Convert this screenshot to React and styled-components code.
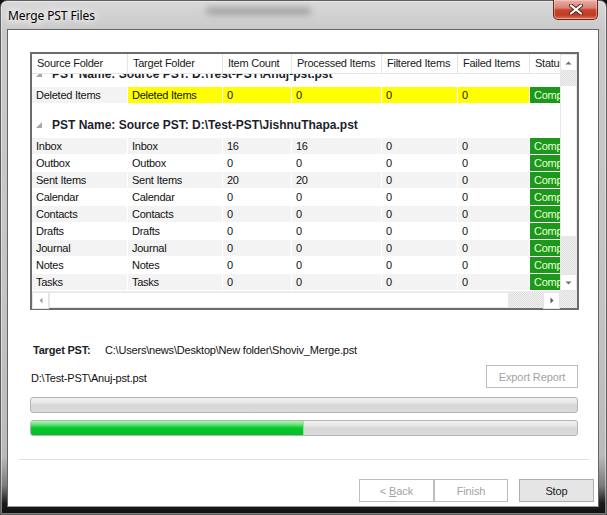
import React from "react";
import styled, { createGlobalStyle } from "styled-components";

const COLS = "96px 95px 69px 90px 76px 72px 80px";
const FONT = `"Liberation Sans", Arial, sans-serif`;

const GlobalStyle = createGlobalStyle`
  *, *::before, *::after { box-sizing: border-box; }
  html, body { margin: 0; padding: 0; width: 607px; height: 515px; overflow: hidden; background: #111; }
  #root { width: 607px; height: 515px; }
`;

const Window = styled.div`
  position: relative;
  width: 607px;
  height: 515px;
  display: flex;
  flex-direction: column;
  padding: 0 7px 7px 6px;
  border: 1px solid #5e5e5e;
  border-radius: 7px 7px 0 0;
  background: linear-gradient(
    to bottom,
    #d8d8d8 0px,
    #cacaca 28px,
    #c4c4c4 300px,
    #bababa 455px,
    #7a7a7a 485px,
    #1c1c1c 502px,
    #0e0e0e 515px
  );
  box-shadow: inset 0 0 0 1px rgba(255, 255, 255, 0.45);
  font-family: ${FONT};
`;

const TitleBar = styled.div`
  height: 28px;
  display: flex;
  align-items: center;
  padding-left: 1px;
  padding-top: 1px;
`;

const Title = styled.span`
  font-family: "Noto Sans", "Open Sans", sans-serif;
  font-size: 12px;
  letter-spacing: -0.1px;
  color: #000;
  text-shadow: 0 0 6px #fff, 0 0 10px #fff, 0 0 14px rgba(255, 255, 255, 0.9);
`;

const Smudge = styled.div`
  position: absolute;
  left: 205px;
  top: 6px;
  width: 105px;
  height: 8px;
  border-radius: 4px;
  background: rgba(110, 110, 110, 0.45);
  filter: blur(3px);
`;

const CloseButton = styled.div`
  position: absolute;
  top: -1px;
  right: 8px;
  width: 45px;
  height: 20px;
  border: 1px solid #6d2419;
  border-top: none;
  border-radius: 0 0 5px 5px;
  background: linear-gradient(
    to bottom,
    #e9b0a6 0%,
    #dc8272 42%,
    #c6442e 52%,
    #c23b25 80%,
    #d9775f 100%
  );
  box-shadow: inset 0 0 0 1px rgba(255, 220, 210, 0.45);
  display: flex;
  align-items: center;
  justify-content: center;
`;

const Client = styled.div`
  flex: 1;
  min-height: 0;
  display: flex;
  flex-direction: column;
  background: #fff;
  border: 1px solid #656565;
  border-bottom-color: #9a9a9a;
  padding: 22px 19px 0 22px;
`;

const GridFrame = styled.div`
  display: grid;
  grid-template-columns: 528px 17px;
  grid-template-rows: 237px 17px;
  width: 549px;
  border: 2px solid #6c6c6c;
  background: #fff;
`;

const Viewport = styled.div`
  grid-row: 1;
  grid-column: 1;
  display: flex;
  flex-direction: column;
  overflow: hidden;
`;

const HeaderRow = styled.div`
  display: grid;
  grid-template-columns: ${COLS};
  height: 20px;
  flex-shrink: 0;
  border-bottom: 1px solid #e5e5e5;
`;

const HeaderCell = styled.div`
  padding-left: 5px;
  line-height: 19px;
  font-size: 11px;
  letter-spacing: -0.25px;
  color: #1a1a1a;
  border-right: 1px solid #e5e5e5;
  white-space: nowrap;
  overflow: hidden;
`;

const Body = styled.div`
  flex: 1;
  overflow: hidden;
`;

const ScrollContent = styled.div`
  margin-top: ${(p) => -p.$offset}px;
`;

const GroupHeader = styled.div`
  height: 34px;
  padding: 14px 0 0 4px;
  display: flex;
  align-items: flex-start;
  gap: 10px;
  font-size: 12px;
  font-weight: bold;
  line-height: 14px;
  color: #1e1e2c;
  white-space: nowrap;
`;

const GroupIcon = styled.svg`
  margin-top: 4px;
  flex-shrink: 0;
`;

const Row = styled.div`
  display: grid;
  grid-template-columns: ${COLS};
  height: 17px;
`;

const Cell = styled.div`
  background: ${(p) => p.$bg};
  color: ${(p) => p.$color || "#111"};
  border-right: 1px solid #fff;
  border-bottom: 1px solid #fff;
  padding-left: 4px;
  font-size: 11px;
  letter-spacing: -0.25px;
  line-height: 16px;
  white-space: nowrap;
  overflow: hidden;
`;

const VScroll = styled.div`
  grid-row: 1;
  grid-column: 2;
  display: flex;
  flex-direction: column;
`;

const HScroll = styled.div`
  grid-row: 2;
  grid-column: 1;
  display: flex;
  border-top: 1px solid #ececec;
`;

const Corner = styled.div`
  grid-row: 2;
  grid-column: 2;
  background: repeating-conic-gradient(#dedede 0 25%, #f0f0f0 0 50%) 0 0 / 2px 2px;
`;

const ScrollButton = styled.div`
  flex: 0 0 17px;
  width: 17px;
  height: 17px;
  background: #fff;
  border: 1px solid #e4e4e4;
  display: flex;
  align-items: center;
  justify-content: center;
`;

const Track = styled.div`
  flex: 0 0 ${(p) => p.$size}px;
  background: repeating-conic-gradient(#dedede 0 25%, #f0f0f0 0 50%) 0 0 / 2px 2px;
`;

const Thumb = styled.div`
  flex: 0 0 ${(p) => p.$size}px;
  background: #fff;
  border: 1px solid #e8e8e8;
`;

const TargetRow = styled.div`
  margin-top: 33px;
  height: 14px;
  display: flex;
  padding-left: 3px;
  font-size: 11px;
  line-height: 14px;
  letter-spacing: -0.2px;
  color: #111;
`;

const Label = styled.span`
  width: 72px;
  font-weight: bold;
  color: #222;
`;

const SourceRow = styled.div`
  margin-top: 8px;
  height: 23px;
  display: flex;
  align-items: center;
  justify-content: space-between;
`;

const SourcePath = styled.span`
  padding: 2px 0 0 1px;
  font-size: 11px;
  letter-spacing: -0.2px;
  color: #111;
`;

const Button = styled.button`
  width: ${(p) => p.$width}px;
  height: 23px;
  margin: 0 ${(p) => p.$mr || 0}px 0 ${(p) => p.$ml || 0}px;
  padding: 0;
  font-family: ${FONT};
  font-size: 11px;
  letter-spacing: -0.1px;
  color: ${(p) => (p.disabled ? "#a3a3a3" : "#1a1a1a")};
  border: 1px solid ${(p) => (p.disabled ? "#bdbdbd" : "#adadad")};
  background: ${(p) =>
    p.disabled
      ? "#fff"
      : "repeating-conic-gradient(#e1e1e1 0 25%, #e9e9e9 0 50%) 0 0 / 2px 2px"};
  u {
    text-decoration: underline;
  }
`;

const Progress = styled.div`
  margin-top: ${(p) => p.$mt}px;
  width: 548px;
  height: 16px;
  border: 1px solid #b4b4b4;
  border-radius: 3px;
  overflow: hidden;
  background: linear-gradient(
    to bottom,
    #f4f4f4 0%,
    #e6e6e6 35%,
    #d7d7d7 50%,
    #dbdbdb 100%
  );
`;

const ProgressFill = styled.div`
  height: 100%;
  width: ${(p) => p.$value}%;
  background: linear-gradient(
    to bottom,
    #b2f2bb 0%,
    #5fe070 28%,
    #07c82b 50%,
    #02bf26 100%
  );
  border-right: 1px solid #9bdca6;
`;

const Separator = styled.div`
  margin: 23px -11px 0 -11px;
  height: 1px;
  background: #e3e3e3;
`;

const ButtonRow = styled.div`
  margin: 19px -15px 0 0;
  display: flex;
  justify-content: flex-end;
`;

const Arrow = ({ dir, color }) => {
  const pts = {
    up: "0.5,4.5 3.5,1.5 6.5,4.5",
    down: "0.5,1.5 3.5,4.5 6.5,1.5",
    left: "4.5,0.5 1.5,3.5 4.5,6.5",
    right: "1.5,0.5 4.5,3.5 1.5,6.5",
  }[dir];
  const vertical = dir === "up" || dir === "down";
  return (
    <svg width={vertical ? 7 : 6} height={vertical ? 6 : 7} viewBox={vertical ? "0 0 7 6" : "0 0 6 7"}>
      <polygon points={pts} fill={color} />
    </svg>
  );
};

const columns = [
  "Source Folder",
  "Target Folder",
  "Item Count",
  "Processed Items",
  "Filtered Items",
  "Failed Items",
  "Status",
];

const groups = [
  {
    name: "PST Name: Source PST: D:\\Test-PST\\Anuj-pst.pst",
    rows: [{ src: "Deleted Items", tgt: "Deleted Items", c: "0", p: "0", f: "0", x: "0", hl: true }],
  },
  {
    name: "PST Name: Source PST: D:\\Test-PST\\JishnuThapa.pst",
    rows: [
      { src: "Inbox", tgt: "Inbox", c: "16", p: "16", f: "0", x: "0" },
      { src: "Outbox", tgt: "Outbox", c: "0", p: "0", f: "0", x: "0" },
      { src: "Sent Items", tgt: "Sent Items", c: "20", p: "20", f: "0", x: "0" },
      { src: "Calendar", tgt: "Calendar", c: "0", p: "0", f: "0", x: "0" },
      { src: "Contacts", tgt: "Contacts", c: "0", p: "0", f: "0", x: "0" },
      { src: "Drafts", tgt: "Drafts", c: "0", p: "0", f: "0", x: "0" },
      { src: "Journal", tgt: "Journal", c: "0", p: "0", f: "0", x: "0" },
      { src: "Notes", tgt: "Notes", c: "0", p: "0", f: "0", x: "0" },
      { src: "Tasks", tgt: "Tasks", c: "0", p: "0", f: "0", x: "0" },
    ],
  },
];

const GREEN = "#1d981d";
const YELLOW = "#ffff00";

function DataRow({ row, index }) {
  const base = index % 2 === 0 ? "#f3f3f3" : "#ffffff";
  const fill = row.hl ? YELLOW : base;
  return (
    <Row>
      <Cell $bg={base}>{row.src}</Cell>
      <Cell $bg={fill}>{row.tgt}</Cell>
      <Cell $bg={fill}>{row.c}</Cell>
      <Cell $bg={fill}>{row.p}</Cell>
      <Cell $bg={fill}>{row.f}</Cell>
      <Cell $bg={fill}>{row.x}</Cell>
      <Cell $bg={GREEN} $color="#eaffd8">Completed</Cell>
    </Row>
  );
}

export default function App() {
  return (
    <>
      <GlobalStyle />
      <Window>
        <TitleBar>
          <Title>Merge PST Files</Title>
        </TitleBar>
        <Smudge />
        <CloseButton>
          <svg width="14" height="11" viewBox="0 0 14 11">
            <path d="M2 1.5 L12 9.5 M12 1.5 L2 9.5" stroke="#4a2a26" strokeWidth="4" strokeLinecap="round" />
            <path d="M2 1.5 L12 9.5 M12 1.5 L2 9.5" stroke="#fff" strokeWidth="2.2" strokeLinecap="round" />
          </svg>
        </CloseButton>
        <Client>
          <GridFrame>
            <Viewport>
              <HeaderRow>
                {columns.map((c) => (
                  <HeaderCell key={c}>{c}</HeaderCell>
                ))}
              </HeaderRow>
              <Body>
                <ScrollContent $offset={21}>
                  {groups.map((g) => (
                    <div key={g.name}>
                      <GroupHeader>
                        <GroupIcon width="6" height="6" viewBox="0 0 6 6">
                          <polygon points="6,0 6,6 0,6" fill="#a8a8a8" />
                        </GroupIcon>
                        {g.name}
                      </GroupHeader>
                      {g.rows.map((r, i) => (
                        <DataRow key={r.src} row={r} index={i} />
                      ))}
                    </div>
                  ))}
                </ScrollContent>
              </Body>
            </Viewport>
            <VScroll>
              <ScrollButton>
                <Arrow dir="up" color="#6e6e6e" />
              </ScrollButton>
              <Track $size={14} />
              <Thumb $size={152} />
              <Track $size={37} />
              <ScrollButton>
                <Arrow dir="down" color="#6e6e6e" />
              </ScrollButton>
            </VScroll>
            <HScroll>
              <ScrollButton>
                <Arrow dir="left" color="#a2a2a2" />
              </ScrollButton>
              <Thumb $size={460} />
              <Track $size={34} />
              <ScrollButton>
                <Arrow dir="right" color="#5a5a5a" />
              </ScrollButton>
            </HScroll>
            <Corner />
          </GridFrame>

          <TargetRow>
            <Label>Target PST:</Label>
            <span>C:\Users\news\Desktop\New folder\Shoviv_Merge.pst</span>
          </TargetRow>
          <SourceRow>
            <SourcePath>D:\Test-PST\Anuj-pst.pst</SourcePath>
            <Button disabled $width={92} $mr={1}>
              Export Report
            </Button>
          </SourceRow>
          <Progress $mt={9} />
          <Progress $mt={7}>
            <ProgressFill $value={50} />
          </Progress>
          <Separator />
          <ButtonRow>
            <Button disabled $width={75}>
              &lt; <u>B</u>ack
            </Button>
            <Button disabled $width={74}>
              Finish
            </Button>
            <Button $width={75} $ml={11}>
              Stop
            </Button>
          </ButtonRow>
        </Client>
      </Window>
    </>
  );
}
